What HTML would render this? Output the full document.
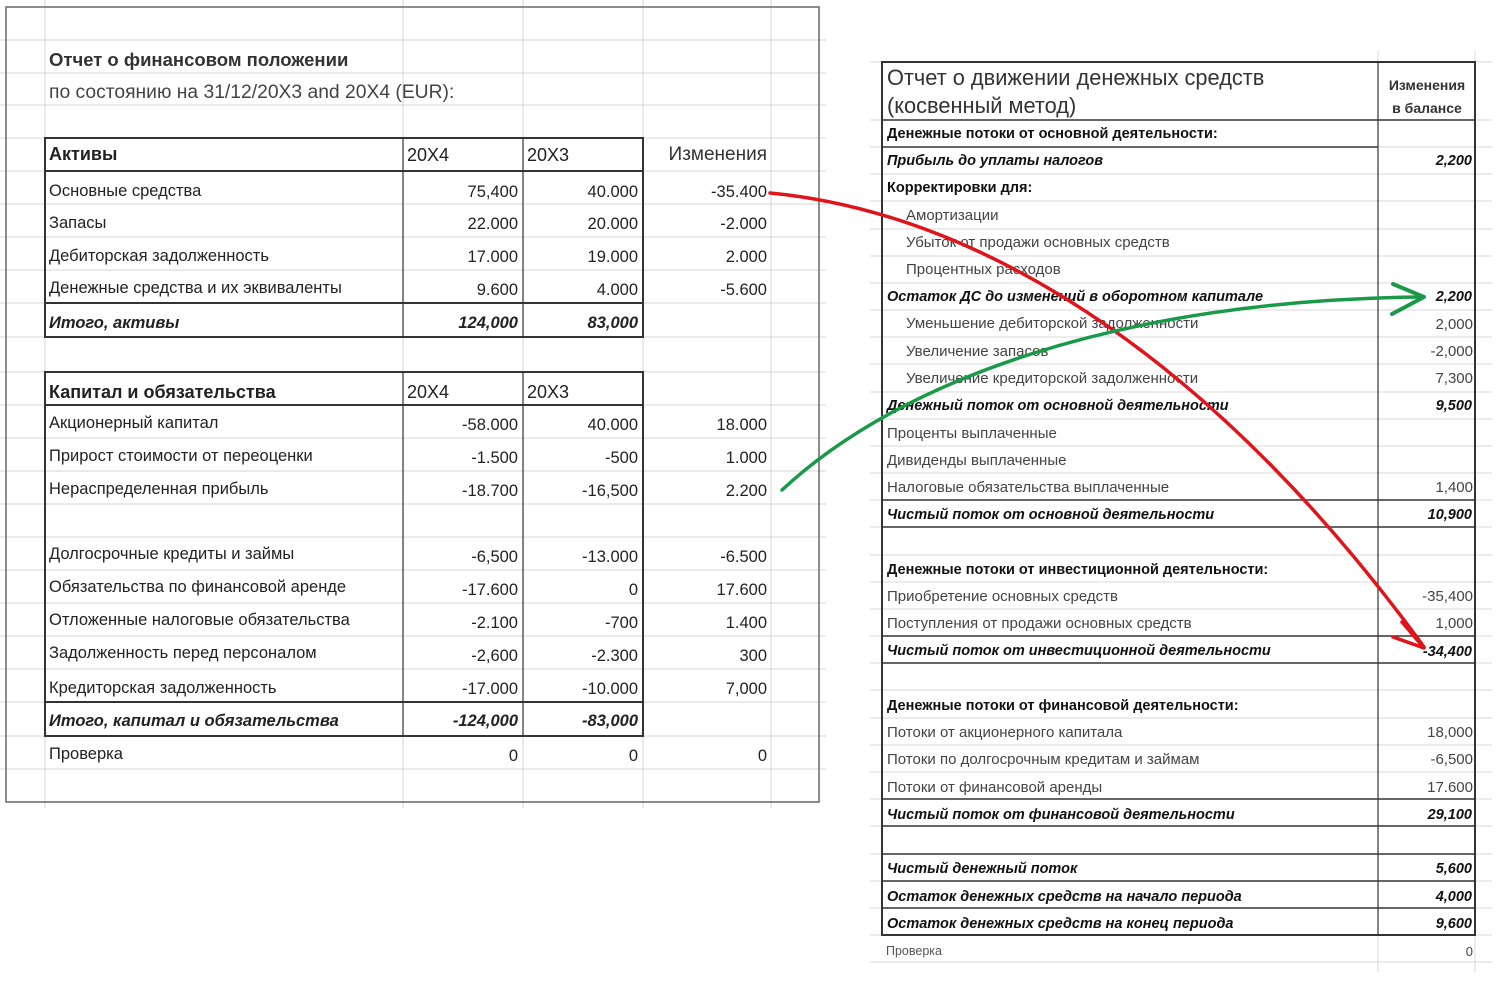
<!DOCTYPE html>
<html><head><meta charset="utf-8"><style>
html,body{margin:0;padding:0;background:#fff;width:1500px;height:998px;overflow:hidden}
svg{display:block}
.l{font-family:"Liberation Sans",sans-serif;font-size:16.5px;fill:#222}
.r{font-family:"Liberation Sans",sans-serif;font-size:15px;fill:#444}
.rb{font-family:"Liberation Sans",sans-serif;font-size:14.5px;fill:#111;font-weight:bold}
.rbi{font-family:"Liberation Sans",sans-serif;font-size:14.5px;fill:#111;font-weight:bold;font-style:italic}
.n{text-anchor:end}
</style></head><body>
<svg width="1500" height="998" viewBox="0 0 1500 998" xmlns="http://www.w3.org/2000/svg">
<g stroke="#d4d4d4" stroke-width="1">
<line x1="0" y1="40" x2="826" y2="40"/><line x1="0" y1="73" x2="826" y2="73"/><line x1="0" y1="105" x2="826" y2="105"/>
<line x1="0" y1="138" x2="826" y2="138"/><line x1="0" y1="171" x2="826" y2="171"/><line x1="0" y1="204" x2="826" y2="204"/>
<line x1="0" y1="237" x2="826" y2="237"/><line x1="0" y1="270" x2="826" y2="270"/><line x1="0" y1="303" x2="826" y2="303"/>
<line x1="0" y1="337" x2="826" y2="337"/><line x1="0" y1="372" x2="826" y2="372"/><line x1="0" y1="405" x2="826" y2="405"/>
<line x1="0" y1="438" x2="826" y2="438"/><line x1="0" y1="471" x2="826" y2="471"/><line x1="0" y1="504" x2="826" y2="504"/>
<line x1="0" y1="537" x2="826" y2="537"/><line x1="0" y1="570" x2="826" y2="570"/><line x1="0" y1="603" x2="826" y2="603"/>
<line x1="0" y1="636" x2="826" y2="636"/><line x1="0" y1="669" x2="826" y2="669"/><line x1="0" y1="702" x2="826" y2="702"/>
<line x1="0" y1="736" x2="826" y2="736"/><line x1="0" y1="769" x2="826" y2="769"/>
<line x1="45" y1="0" x2="45" y2="808"/><line x1="403" y1="0" x2="403" y2="808"/><line x1="523" y1="0" x2="523" y2="808"/>
<line x1="643" y1="0" x2="643" y2="808"/><line x1="771" y1="0" x2="771" y2="808"/>
</g>
<rect x="6" y="7" width="813" height="795" fill="none" stroke="#666" stroke-width="1.5"/>
<g stroke="#333" stroke-width="2" fill="none">
<rect x="45" y="138" width="598" height="199"/>
<line x1="45" y1="171" x2="643" y2="171"/><line x1="45" y1="303" x2="643" y2="303"/>
<rect x="45" y="372" width="598" height="364"/>
<line x1="45" y1="405" x2="643" y2="405"/><line x1="45" y1="702" x2="643" y2="702"/>
</g>
<g stroke="#333" stroke-width="1.2">
<line x1="403" y1="138" x2="403" y2="337"/><line x1="523" y1="138" x2="523" y2="337"/>
<line x1="403" y1="372" x2="403" y2="736"/><line x1="523" y1="372" x2="523" y2="736"/>
</g>
<text x="49" y="66" class="l" style="font-weight:bold;fill:#333;font-size:18.5px">Отчет о финансовом положении</text>
<text x="49" y="98" class="l" style="font-size:19.3px;fill:#444">по состоянию на 31/12/20X3 and 20X4 (EUR):</text>
<g class="l">
<text x="49" y="160" style="font-weight:bold;font-size:18px">Активы</text>
<text x="407" y="161" style="font-size:18px">20X4</text>
<text x="527" y="161" style="font-size:18px">20X3</text>
<text x="767" y="160" class="n" style="font-size:19px;fill:#333">Изменения</text>
<text x="49" y="196">Основные средства</text><text x="518" y="197" class="n">75,400</text><text x="638" y="197" class="n">40.000</text><text x="767" y="197" class="n">-35.400</text>
<text x="49" y="228">Запасы</text><text x="518" y="229" class="n">22.000</text><text x="638" y="229" class="n">20.000</text><text x="767" y="229" class="n">-2.000</text>
<text x="49" y="261">Дебиторская задолженность</text><text x="518" y="262" class="n">17.000</text><text x="638" y="262" class="n">19.000</text><text x="767" y="262" class="n">2.000</text>
<text x="49" y="293">Денежные средства и их эквиваленты</text><text x="518" y="295" class="n">9.600</text><text x="638" y="295" class="n">4.000</text><text x="767" y="295" class="n">-5.600</text>
<g style="font-weight:bold;font-style:italic"><text x="49" y="328">Итого, активы</text><text x="518" y="328" class="n">124,000</text><text x="638" y="328" class="n">83,000</text></g>
<text x="49" y="398" style="font-weight:bold;font-size:18px">Капитал и обязательства</text>
<text x="407" y="398" style="font-size:18px">20X4</text>
<text x="527" y="398" style="font-size:18px">20X3</text>
<text x="49" y="428">Акционерный капитал</text><text x="518" y="430" class="n">-58.000</text><text x="638" y="430" class="n">40.000</text><text x="767" y="430" class="n">18.000</text>
<text x="49" y="461">Прирост стоимости от переоценки</text><text x="518" y="463" class="n">-1.500</text><text x="638" y="463" class="n">-500</text><text x="767" y="463" class="n">1.000</text>
<text x="49" y="494">Нераспределенная прибыль</text><text x="518" y="496" class="n">-18.700</text><text x="638" y="496" class="n">-16,500</text><text x="767" y="496" class="n">2.200</text>
<text x="49" y="559">Долгосрочные кредиты и займы</text><text x="518" y="562" class="n">-6,500</text><text x="638" y="562" class="n">-13.000</text><text x="767" y="562" class="n">-6.500</text>
<text x="49" y="592">Обязательства по финансовой аренде</text><text x="518" y="595" class="n">-17.600</text><text x="638" y="595" class="n">0</text><text x="767" y="595" class="n">17.600</text>
<text x="49" y="625">Отложенные налоговые обязательства</text><text x="518" y="628" class="n">-2.100</text><text x="638" y="628" class="n">-700</text><text x="767" y="628" class="n">1.400</text>
<text x="49" y="658">Задолженность перед персоналом</text><text x="518" y="661" class="n">-2,600</text><text x="638" y="661" class="n">-2.300</text><text x="767" y="661" class="n">300</text>
<text x="49" y="693">Кредиторская задолженность</text><text x="518" y="694" class="n">-17.000</text><text x="638" y="694" class="n">-10.000</text><text x="767" y="694" class="n">7,000</text>
<g style="font-weight:bold;font-style:italic"><text x="49" y="726">Итого, капитал и обязательства</text><text x="518" y="726" class="n">-124,000</text><text x="638" y="726" class="n">-83,000</text></g>
<text x="49" y="759">Проверка</text><text x="518" y="761" class="n">0</text><text x="638" y="761" class="n">0</text><text x="767" y="761" class="n">0</text>
</g>
<g stroke="#d8d8d8" stroke-width="1">
<line x1="870" y1="62" x2="1492" y2="62"/>
<line x1="870" y1="120" x2="1492" y2="120"/><line x1="870" y1="147" x2="1492" y2="147"/><line x1="870" y1="174" x2="1492" y2="174"/>
<line x1="870" y1="201" x2="1492" y2="201"/><line x1="870" y1="229" x2="1492" y2="229"/><line x1="870" y1="256" x2="1492" y2="256"/>
<line x1="870" y1="283" x2="1492" y2="283"/><line x1="870" y1="310" x2="1492" y2="310"/><line x1="870" y1="337" x2="1492" y2="337"/>
<line x1="870" y1="364" x2="1492" y2="364"/><line x1="870" y1="392" x2="1492" y2="392"/><line x1="870" y1="419" x2="1492" y2="419"/>
<line x1="870" y1="446" x2="1492" y2="446"/><line x1="870" y1="473" x2="1492" y2="473"/><line x1="870" y1="500" x2="1492" y2="500"/>
<line x1="870" y1="527" x2="1492" y2="527"/><line x1="870" y1="555" x2="1492" y2="555"/><line x1="870" y1="582" x2="1492" y2="582"/>
<line x1="870" y1="609" x2="1492" y2="609"/><line x1="870" y1="636" x2="1492" y2="636"/><line x1="870" y1="663" x2="1492" y2="663"/>
<line x1="870" y1="690" x2="1492" y2="690"/><line x1="870" y1="718" x2="1492" y2="718"/><line x1="870" y1="745" x2="1492" y2="745"/>
<line x1="870" y1="772" x2="1492" y2="772"/><line x1="870" y1="799" x2="1492" y2="799"/><line x1="870" y1="826" x2="1492" y2="826"/>
<line x1="870" y1="854" x2="1492" y2="854"/><line x1="870" y1="881" x2="1492" y2="881"/><line x1="870" y1="908" x2="1492" y2="908"/>
<line x1="870" y1="935" x2="1492" y2="935"/><line x1="870" y1="962" x2="1492" y2="962"/>
<line x1="1378" y1="50" x2="1378" y2="972"/><line x1="1475" y1="50" x2="1475" y2="972"/>
</g>
<g stroke="#333" fill="none">
<rect x="882" y="62" width="593" height="873" stroke-width="2"/>
<line x1="1378" y1="62" x2="1378" y2="935" stroke-width="1.2"/>
<g stroke-width="1.5">
<line x1="882" y1="120" x2="1475" y2="120"/><line x1="882" y1="147" x2="1378" y2="147"/>
<line x1="882" y1="500" x2="1475" y2="500"/><line x1="882" y1="527" x2="1475" y2="527"/>
<line x1="882" y1="636" x2="1475" y2="636"/><line x1="882" y1="663" x2="1475" y2="663"/>
<line x1="882" y1="799" x2="1475" y2="799"/><line x1="882" y1="826" x2="1475" y2="826"/>
<line x1="882" y1="854" x2="1475" y2="854"/><line x1="882" y1="881" x2="1475" y2="881"/><line x1="882" y1="908" x2="1475" y2="908"/>
</g>
<line x1="882" y1="935" x2="1475" y2="935" stroke-width="2"/>
</g>
<text x="887" y="85" style="font-family:'Liberation Sans',sans-serif;font-size:21.8px;fill:#333">Отчет о движении денежных средств</text>
<text x="887" y="113" style="font-family:'Liberation Sans',sans-serif;font-size:21.8px;fill:#333">(косвенный метод)</text>
<text x="1427" y="90" class="rb" style="text-anchor:middle;font-size:14px;fill:#333">Изменения</text>
<text x="1427" y="113" class="rb" style="text-anchor:middle;font-size:14px;fill:#333">в балансе</text>
<text x="887" y="138" class="rb">Денежные потоки от основной деятельности:</text>
<text x="887" y="165" class="rbi">Прибыль до уплаты налогов</text><text x="1472" y="165" class="rbi n">2,200</text>
<text x="887" y="192" class="rb">Корректировки для:</text>
<text x="906" y="220" class="r">Амортизации</text>
<text x="906" y="247" class="r">Убыток от продажи основных средств</text>
<text x="906" y="274" class="r">Процентных расходов</text>
<text x="887" y="301" class="rbi">Остаток ДС до изменений в оборотном капитале</text><text x="1472" y="301" class="rbi n">2,200</text>
<text x="906" y="328" class="r">Уменьшение дебиторской задолженности</text><text x="1473" y="329" class="r n">2,000</text>
<text x="906" y="356" class="r">Увеличение запасов</text><text x="1473" y="356" class="r n">-2,000</text>
<text x="906" y="383" class="r">Увеличение кредиторской задолженности</text><text x="1473" y="383" class="r n">7,300</text>
<text x="887" y="410" class="rbi">Денежный поток от основной деятельности</text><text x="1472" y="410" class="rbi n">9,500</text>
<text x="887" y="438" class="r">Проценты выплаченные</text>
<text x="887" y="465" class="r">Дивиденды выплаченные</text>
<text x="887" y="492" class="r">Налоговые обязательства выплаченные</text><text x="1473" y="492" class="r n">1,400</text>
<text x="887" y="519" class="rbi">Чистый поток от основной деятельности</text><text x="1472" y="519" class="rbi n">10,900</text>
<text x="887" y="574" class="rb">Денежные потоки от инвестиционной деятельности:</text>
<text x="887" y="601" class="r">Приобретение основных средств</text><text x="1473" y="601" class="r n">-35,400</text>
<text x="887" y="628" class="r">Поступления от продажи основных средств</text><text x="1473" y="628" class="r n">1,000</text>
<text x="887" y="655" class="rbi">Чистый поток от инвестиционной деятельности</text><text x="1472" y="656" class="rbi n">-34,400</text>
<text x="887" y="710" class="rb">Денежные потоки от финансовой деятельности:</text>
<text x="887" y="737" class="r">Потоки от акционерного капитала</text><text x="1473" y="737" class="r n">18,000</text>
<text x="887" y="764" class="r">Потоки по долгосрочным кредитам и займам</text><text x="1473" y="764" class="r n">-6,500</text>
<text x="887" y="792" class="r">Потоки от финансовой аренды</text><text x="1473" y="792" class="r n">17.600</text>
<text x="887" y="819" class="rbi">Чистый поток от финансовой деятельности</text><text x="1472" y="819" class="rbi n">29,100</text>
<text x="887" y="873" class="rbi">Чистый денежный поток</text><text x="1472" y="873" class="rbi n">5,600</text>
<text x="887" y="901" class="rbi">Остаток денежных средств на начало периода</text><text x="1472" y="901" class="rbi n">4,000</text>
<text x="887" y="928" class="rbi">Остаток денежных средств на конец периода</text><text x="1472" y="928" class="rbi n">9,600</text>
<text x="886" y="955" class="r" style="font-size:12.5px;fill:#555">Проверка</text><text x="1473" y="956" class="r n" style="font-size:13px">0</text>
<g fill="none" stroke-linecap="round" stroke-linejoin="round">
<path d="M770,193 C1000,215 1230,380 1424,647" stroke="#e0141b" stroke-width="3.5"/>
<path d="M1402,622 L1424,648 L1393,637" stroke="#e0141b" stroke-width="3.5"/>
<path d="M782,490 C900,380 1120,300 1422,297" stroke="#1a9a48" stroke-width="3.5"/>
<path d="M1393,284 L1424,297 L1392,314" stroke="#1a9a48" stroke-width="4"/>
</g>
</svg>
</body></html>
